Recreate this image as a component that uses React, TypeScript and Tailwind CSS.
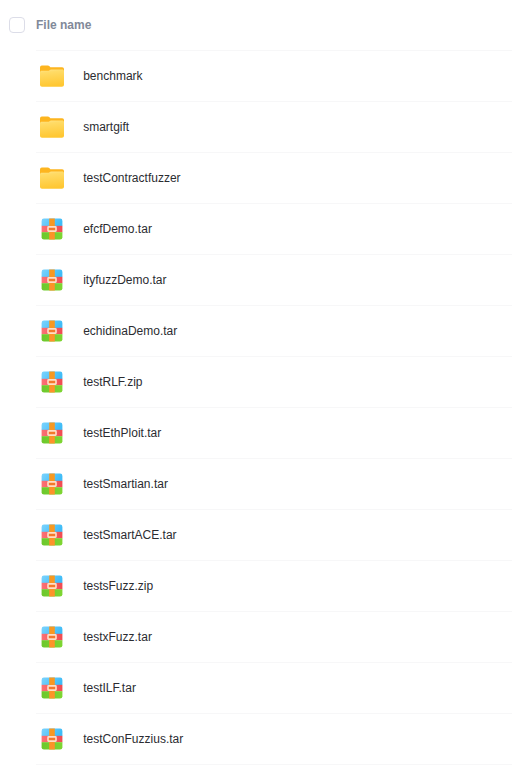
const files = [
  'benchmark', 'smartgift', 'testContractfuzzer', 'efcfDemo.tar', 'ityfuzzDemo.tar',
  'echidinaDemo.tar', 'testRLF.zip', 'testEthPloit.tar', 'testSmartian.tar',
  'testSmartACE.tar', 'testsFuzz.zip', 'testxFuzz.tar', 'testILF.tar', 'testConFuzzius.tar',
];

function Gradients() {
  return (
    <svg className="absolute size-0" aria-hidden="true">
      <defs>
        <linearGradient id="folder" x1="0" y1="0" x2="0.15" y2="1">
          <stop stopColor="#ffe58c" />
          <stop offset="0.2" stopColor="#ffdb66" />
          <stop offset="1" stopColor="#ffc732" />
        </linearGradient>
        <linearGradient id="blue" x1="0" y1="0" x2="1" y2="0.3">
          <stop stopColor="#7fd4fd" />
          <stop offset="1" stopColor="#3fbcf7" />
        </linearGradient>
        <linearGradient id="red">
          <stop stopColor="#fb7276" />
          <stop offset="1" stopColor="#ef4a50" />
        </linearGradient>
        <linearGradient id="green">
          <stop stopColor="#6cc72c" />
          <stop offset="1" stopColor="#7ed632" />
        </linearGradient>
        <linearGradient id="strap" x1="0" y1="0" x2="0" y2="1">
          <stop stopColor="#f59a20" />
          <stop offset="1" stopColor="#ff912b" />
        </linearGradient>
        <clipPath id="box">
          <rect x="5.6" y="5.6" width="20.800" height="20.900" rx="2.300" />
        </clipPath>
      </defs>
    </svg>
  );
}

function FolderIcon() {
  return (
    <svg className="size-8 shrink-0" viewBox="0 0 32 32">
      <path fill="#fdb51f" d="M4 7.400a1.800 1.800 0 0 1 1.800-1.800h6c.8 0 1.200.2 1.700.7l.8.9h11.900A1.800 1.800 0 0 1 28 9V25H4z" />
      <path fill="url(#folder)" d="M4 12.500c0-1.100.8-1.700 1.700-1.700h6.100c.8 0 1.200-.2 1.700-.6.5-.4.9-.6 1.700-.6h11.100c.9 0 1.700.6 1.700 1.700v13.500c0 1.100-.9 2-2 2H6c-1.100 0-2-.9-2-2z" />
    </svg>
  );
}

function ArchiveIcon() {
  return (
    <svg className="size-8 shrink-0" viewBox="0 0 32 32">
      <g clipPath="url(#box)">
        <rect x="5" y="5" width="22" height="8" fill="url(#blue)" />
        <rect x="5" y="12.800" width="22" height="6.500" fill="url(#red)" />
        <rect x="5" y="19.200" width="22" height="8" fill="url(#green)" />
        <rect x="13.200" y="5" width="5.600" height="22" fill="url(#strap)" />
      </g>
      <rect x="12" y="13.900" width="8" height="4.200" rx=".6" fill="#f4782b" stroke="#ffdfc8" strokeWidth="1.600" />
    </svg>
  );
}

export default function App() {
  return (
    <main className="h-[776px] w-full overflow-hidden bg-white pl-[9px] pr-[2px] font-['Liberation_Sans',Arial,sans-serif] text-xs">
      <Gradients />
      <header className="flex h-[51px] items-start">
        <span className="mt-[17px] size-4 shrink-0 rounded-[4px] border border-[#dcdde8]" />
        <div className="ml-[11px] flex h-full flex-1 border-b border-[#f7f7f8] font-bold text-[#818999]">
          <span className="mt-[17px] leading-4">File name</span>
        </div>
      </header>
      <ul className="ml-[27px]">
        {files.map((name, i) => (
          <li key={name} className="flex h-[51px] items-center border-b border-[#f7f7f8] text-[#2b2c31]">
            {i < 3 ? <FolderIcon /> : <ArchiveIcon />}
            <span className="ml-[15.200px] leading-4">{name}</span>
          </li>
        ))}
      </ul>
    </main>
  );
}
